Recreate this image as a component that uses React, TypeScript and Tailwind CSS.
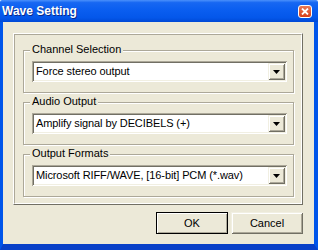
import React from "react"

const raised = "shadow-[inset_1px_1px_0_#F1EFE2,inset_-1px_-1px_0_#716F64,inset_2px_2px_0_#fff,inset_-2px_-2px_0_#ACA899]"
const sunken = "shadow-[inset_1px_1px_0_#ACA899,inset_-1px_-1px_0_#fff,inset_2px_2px_0_#716F64,inset_-2px_-2px_0_#F1EFE2]"

const Combo: React.FC<{ value: string }> = ({ value }) => {
	return (
		<div className={`h-[21px] bg-white p-[2px] flex ${sunken}`}>
			<div className="flex-1 pl-[2px] leading-[17px] text-black whitespace-nowrap overflow-hidden tracking-[-0.1px]">{value}</div>
			<div className={`w-[17px] h-[17px] bg-[#ECE9D8] flex items-center justify-center ${raised}`}>
				<svg width="7" height="4" viewBox="0 0 7 4">
					<path d="M0 0h7L3.5 4z" fill="#000" />
				</svg>
			</div>
		</div>
	)
}

const Group: React.FC<{ label: string, value: string }> = ({ label, value }) => {
	return (
		<div className="relative h-[43px] border border-[#ACA899] shadow-[inset_1px_1px_0_#fff,1px_1px_0_#fff] pt-[10px] pl-[8px] pr-[6px]">
			<span className="absolute -top-[8px] left-[6px] px-[2px] bg-[#ECE9D8] leading-[13px] text-black">{label}</span>
			<Combo value={value} />
		</div>
	)
}

export default function App() {
	return (
		<div className="w-[318px] h-[250px] flex flex-col font-['Liberation_Sans',Arial,sans-serif] text-[11px] select-none">
			{/* title bar */}
			<div className="h-[22px] flex items-center pl-[2px] pr-[6px] rounded-t-[2px] bg-[linear-gradient(to_bottom,#4A90FB_0%,#1767F2_12%,#0A5EF0_45%,#0457EA_80%,#0049D6_100%)]">
				<span className="font-bold text-white text-[12px] [text-shadow:1px_1px_0_#0A2A8A]">Wave Setting</span>
				<div className="ml-auto w-[14px] h-[13px] rounded-[3px] border border-white bg-[linear-gradient(to_bottom,#EA7A55,#D6401A)] flex items-center justify-center">
					<svg width="8" height="7" viewBox="0 0 8 7">
						<path d="M1 0.5L7 6.5M7 0.5L1 6.5" stroke="#fff" strokeWidth="1.8" />
					</svg>
				</div>
			</div>

			{/* client */}
			<div className="flex-1 flex flex-col bg-[#ECE9D8] border-l-[3px] border-r-[4px] border-b-[6px] border-l-[#0055EA] border-r-[#0055EA] border-b-[#0840C8] pt-[11px] pl-[10px] pr-[11px]">
				<div className="h-[172px] border border-t-white border-l-white border-r-[#716F64] border-b-[#716F64]">
					<div className="h-full border border-t-[#ACA899] border-l-[#ACA899] border-r-white border-b-white pt-[15px] pl-[8px] pr-[7px] flex flex-col gap-[9px]">
						<Group label="Channel Selection" value="Force stereo output" />
						<Group label="Audio Output" value="Amplify signal by DECIBELS (+)" />
						<Group label="Output Formats" value="Microsoft RIFF/WAVE, [16-bit] PCM (*.wav)" />
					</div>
				</div>

				<div className="mt-[7px] flex justify-end gap-[3px]">
					<button className="w-[72px] h-[22px] border border-black bg-[#ECE9D8] text-black text-[11px] shadow-[inset_1px_1px_0_#fff,inset_-1px_-1px_0_#ACA899]">OK</button>
					<button className={`w-[72px] h-[22px] bg-[#ECE9D8] text-black text-[11px] ${raised}`}>Cancel</button>
				</div>
			</div>
		</div>
	)
}
